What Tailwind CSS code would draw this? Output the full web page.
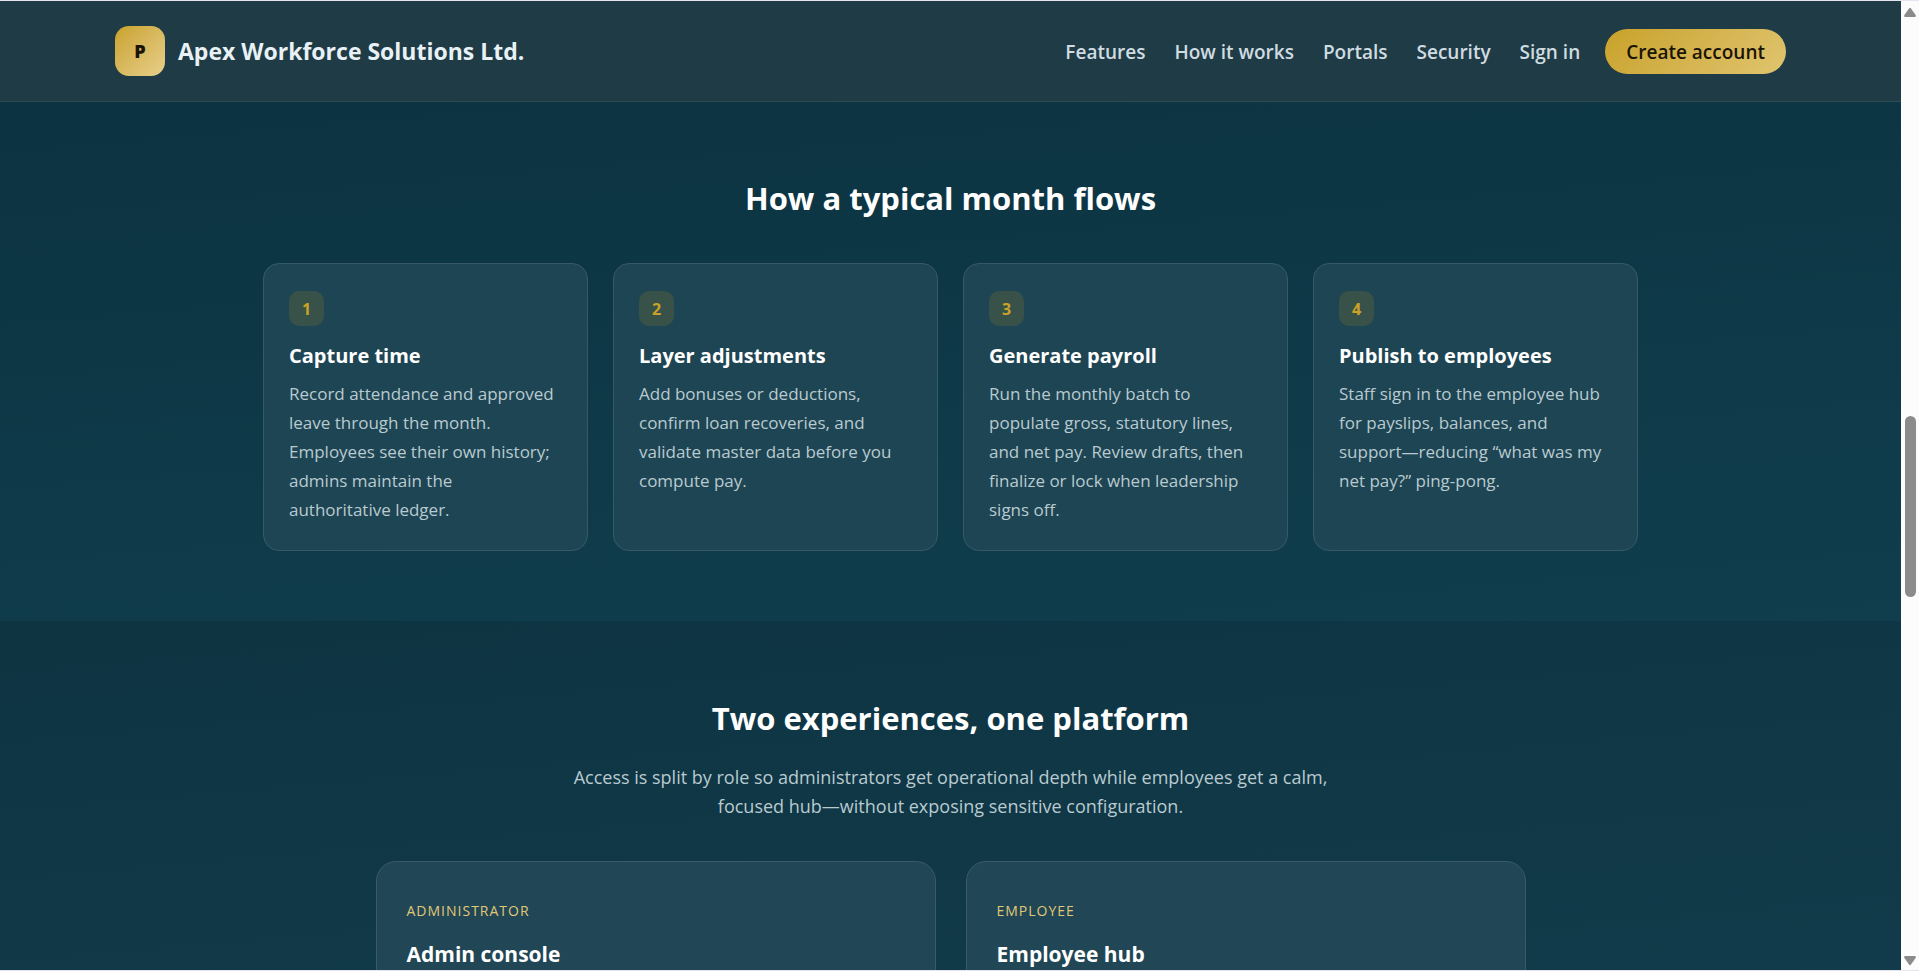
<!DOCTYPE html>
<html lang="en">
<head>
  <meta charset="UTF-8" />
  <meta name="viewport" content="width=device-width, initial-scale=1.0" />
  <title>Apex Workforce Solutions Ltd.</title>
  <script src="https://cdn.jsdelivr.net/npm/@tailwindcss/browser@4"></script>
</head>
<body class="flex h-screen overflow-hidden border-y border-[#e6e4ee] bg-[#fcfcfc] font-['Open_Sans',sans-serif] text-[#b9cad0]">
  <div class="flex min-w-0 flex-1 flex-col overflow-hidden">
    <header class="shrink-0 border-b border-[#2d4b53] bg-[#1f3b45]">
      <div class="mx-auto flex h-[100px] max-w-[1671px] items-center justify-between">
        <a href="#" class="flex items-center gap-[13px] text-[23px] font-bold text-[#e8f1f5]">
          <span class="flex size-[50px] items-center justify-center rounded-[14px] bg-linear-135 from-[#c9a227] to-[#e8d08a] text-[18px] font-extrabold text-[#1a1405]">P</span>
          Apex Workforce Solutions Ltd.
        </a>
        <nav class="flex items-baseline gap-[29px] text-[19px] leading-[27px] font-semibold text-[#cfdce1]">
          <a href="#features">Features</a>
          <a href="#flow">How it works</a>
          <a href="#portals">Portals</a>
          <a href="#security">Security</a>
          <a href="#signin">Sign in</a>
          <a href="#register" class="-ml-1 rounded-full bg-linear-135 from-[#c9a227] to-[#e0c56e] px-[21px] pt-[10px] pb-2 text-[#1a1405]">Create account</a>
        </nav>
      </div>
    </header>

    <main>
      <section id="flow" class="bg-linear-175 from-[#0c3341] to-[#103e4d] px-6 pt-[72px] pb-[70px]">
        <h2 class="text-center text-[31px] leading-[48px] font-bold text-white">How a typical month flows</h2>
        <div class="mx-auto mt-[41px] grid max-w-[1375px] grid-cols-4 gap-[25px]">
          <article class="rounded-2xl border border-[#375967] bg-[#1e4553] pt-[27px] pr-[30px] pb-[26px] pl-[25px]">
            <span class="flex size-[35px] items-center justify-center rounded-[10px] bg-[#395249] text-[16px] font-bold text-[#c9a227]">1</span>
            <h3 class="mt-[15px] text-[20px] leading-[30px] font-bold text-white">Capture time</h3>
            <p class="mt-2 text-[17px] leading-[29px]">Record attendance and approved leave through the month. Employees see their own history; admins maintain the authoritative ledger.</p>
          </article>
          <article class="rounded-2xl border border-[#375967] bg-[#1e4553] pt-[27px] pr-[30px] pb-[26px] pl-[25px]">
            <span class="flex size-[35px] items-center justify-center rounded-[10px] bg-[#395249] text-[16px] font-bold text-[#c9a227]">2</span>
            <h3 class="mt-[15px] text-[20px] leading-[30px] font-bold text-white">Layer adjustments</h3>
            <p class="mt-2 text-[17px] leading-[29px]">Add bonuses or deductions, confirm loan recoveries, and validate master data before you compute pay.</p>
          </article>
          <article class="rounded-2xl border border-[#375967] bg-[#1e4553] pt-[27px] pr-[30px] pb-[26px] pl-[25px]">
            <span class="flex size-[35px] items-center justify-center rounded-[10px] bg-[#395249] text-[16px] font-bold text-[#c9a227]">3</span>
            <h3 class="mt-[15px] text-[20px] leading-[30px] font-bold text-white">Generate payroll</h3>
            <p class="mt-2 text-[17px] leading-[29px]">Run the monthly batch to populate gross, statutory lines, and net pay. Review drafts, then finalize or lock when leadership signs off.</p>
          </article>
          <article class="rounded-2xl border border-[#375967] bg-[#1e4553] pt-[27px] pr-[30px] pb-[26px] pl-[25px]">
            <span class="flex size-[35px] items-center justify-center rounded-[10px] bg-[#395249] text-[16px] font-bold text-[#c9a227]">4</span>
            <h3 class="mt-[15px] text-[20px] leading-[30px] font-bold text-white">Publish to employees</h3>
            <p class="mt-2 text-[17px] leading-[29px]">Staff sign in to the employee hub for payslips, balances, and support—reducing “what was my net pay?” ping-pong.</p>
          </article>
        </div>
      </section>

      <section id="portals" class="bg-linear-175 from-[#0e3442] to-[#123c4c] px-6 pt-[73px] pb-[70px]">
        <h2 class="text-center text-[31px] leading-[48px] font-bold text-white">Two experiences, one platform</h2>
        <p class="mx-auto mt-[21px] max-w-[800px] text-center text-[18px] leading-[29px]">Access is split by role so administrators get operational depth while employees get a calm, focused hub—without exposing sensitive configuration.</p>
        <div class="mx-auto mt-10 grid max-w-[1150px] grid-cols-2 gap-[30px]">
          <article class="rounded-[20px] border border-[#395b66] bg-[#214655] px-[30px] py-[38px]">
            <p class="text-[14px] leading-[22px] tracking-[1px] text-[#e0c878] uppercase">Administrator</p>
            <h3 class="mt-4 text-[21px] leading-[32px] font-bold text-white">Admin console</h3>
          </article>
          <article class="rounded-[20px] border border-[#395b66] bg-[#214655] px-[30px] py-[38px]">
            <p class="text-[14px] leading-[22px] tracking-[1px] text-[#e0c878] uppercase">Employee</p>
            <h3 class="mt-4 text-[21px] leading-[32px] font-bold text-white">Employee hub</h3>
          </article>
        </div>
      </section>
    </main>
  </div>

  <!-- scrollbar -->
  <div class="flex w-[18px] shrink-0 flex-col items-center bg-[#fcfcfc] pt-[6px] pb-1" aria-hidden="true">
    <svg class="h-[10px] w-3" viewBox="0 0 12 10" fill="#8b8b8b"><path d="M5 1.5Q6 .2 7 1.5L11.6 8Q12.2 9.7 11 10H1Q-.2 9.7 .4 8Z" /></svg>
    <div class="flex flex-1 flex-col items-center">
      <div class="flex-[399]"></div>
      <div class="w-[11px] flex-[182] rounded-full bg-[#8b8b8b]"></div>
      <div class="flex-[359]"></div>
    </div>
    <svg class="h-[10px] w-3" viewBox="0 0 12 10" fill="#8b8b8b"><path d="M5 8.5Q6 9.8 7 8.5L11.6 2Q12.2 .3 11 0H1Q-.2 .3 .4 2Z" /></svg>
  </div>
</body>
</html>
